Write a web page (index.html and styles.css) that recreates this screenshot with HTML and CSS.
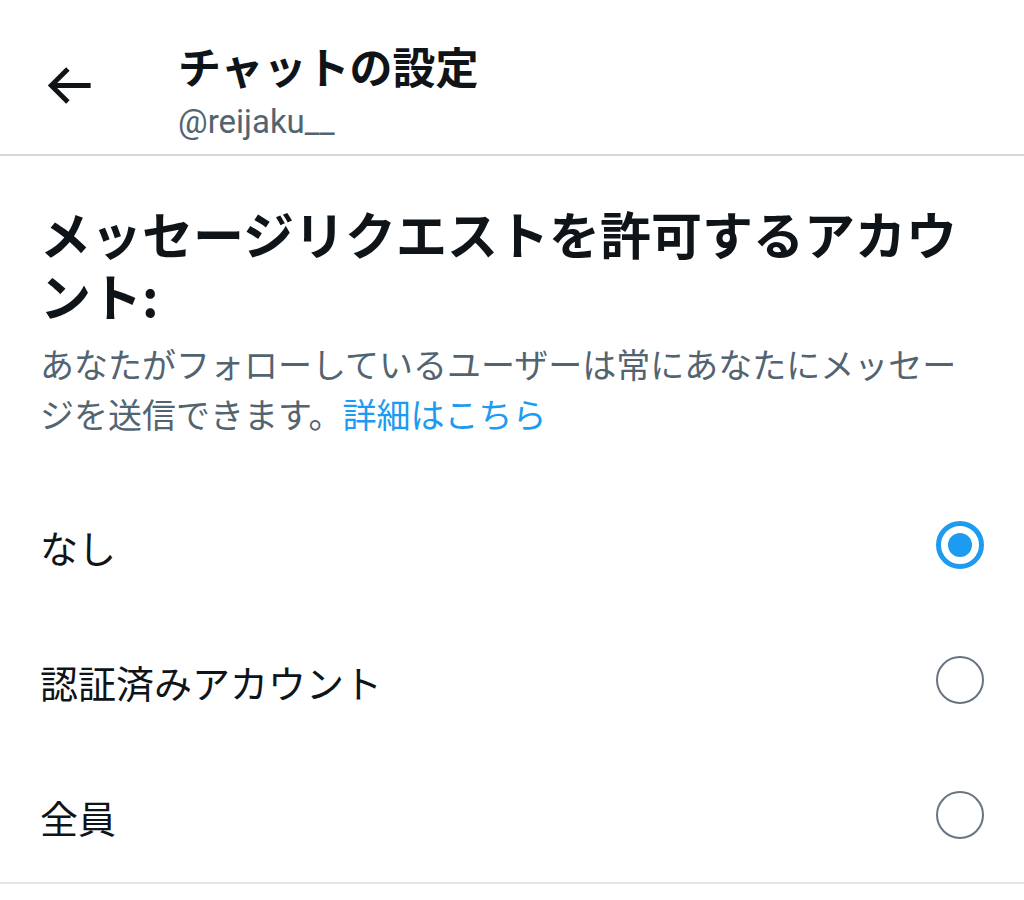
FILE: index.html
```html
<!DOCTYPE html>
<html lang="ja">
<head>
<meta charset="utf-8">
<title>チャットの設定</title>
<link rel="stylesheet" href="styles.css">
</head>
<body>
<header class="topbar">
  <button class="back" aria-label="戻る">
    <svg viewBox="0 0 24 24" class="back-icon"><path d="M7.414 13l5.043 5.04-1.414 1.42L3.586 12l7.457-7.46 1.414 1.42L7.414 11H21v2H7.414z"/></svg>
  </button>
  <div class="titles">
    <div class="title">チャットの設定</div>
    <div class="handle">@reijaku__</div>
  </div>
</header>
<main class="settings">
  <h1 class="heading">メッセージリクエストを許可するアカウント:</h1>
  <p class="desc">あなたがフォローしているユーザーは常にあなたにメッセージを送信できます。<a class="link" href="#">詳細はこちら</a></p>
  <ul class="options">
    <li class="option"><span class="label">なし</span><span class="radio checked"></span></li>
    <li class="option"><span class="label">認証済みアカウント</span><span class="radio"></span></li>
    <li class="option"><span class="label">全員</span><span class="radio"></span></li>
  </ul>
</main>
</body>
</html>
```
FILE: styles.css
```css
html, body {
  margin: 0;
  padding: 0;
  background: #ffffff;
}

body {
  font-family: Roboto, "Noto Sans CJK JP", sans-serif;
  color: #0f1419;
}

.topbar {
  display: flex;
  align-items: flex-start;
  height: 154px;
  border-bottom: 2px solid #d6d9db;
  box-sizing: content-box;
}

.back {
  display: flex;
  padding: 0;
  margin: 56px 0 0 39px;
  border: 0;
  background: none;
  width: 59px;
  height: 59px;
}

.back-icon {
  width: 59px;
  height: 59px;
  fill: #0f1419;
}

.titles {
  margin-left: 80px;
  padding-top: 38px;
  display: flex;
  flex-direction: column;
}

.title {
  font-family: "Noto Sans CJK JP", sans-serif;
  font-weight: 700;
  font-size: 43px;
  line-height: 54px;
}

.handle {
  margin-top: 10px;
  font-size: 33px;
  line-height: 40px;
  color: #536471;
}

.settings {
  padding: 0 40px 0 40px;
  display: flex;
  flex-direction: column;
}

.heading {
  margin: 46px 0 0;
  font-family: "Noto Sans CJK JP", sans-serif;
  font-weight: 700;
  font-size: 51px;
  line-height: 62px;
}

.desc {
  margin: 13px 0 0;
  font-family: "Noto Sans CJK JP", sans-serif;
  font-size: 34px;
  line-height: 50px;
  color: #536471;
}

.link {
  color: #1d9bf0;
  text-decoration: none;
}

.options {
  list-style: none;
  margin: 38px -40px 0 -40px;
  padding: 0;
  border-bottom: 2px solid #e4e6e8;
}

.option {
  display: flex;
  align-items: center;
  justify-content: space-between;
  height: 135px;
  padding: 0 40px 0 40px;
}

.label {
  font-family: "Noto Sans CJK JP", sans-serif;
  font-size: 38px;
  line-height: 50px;
  position: relative;
  top: 2px;
}

.radio {
  width: 48px;
  height: 48px;
  box-sizing: border-box;
  border-radius: 50%;
  border: 2.5px solid #687480;
  display: flex;
  align-items: center;
  justify-content: center;
}

.radio.checked {
  border: 5px solid #1d9bf0;
}

.radio.checked::after {
  content: "";
  width: 24px;
  height: 24px;
  border-radius: 50%;
  background: #1d9bf0;
}
```
